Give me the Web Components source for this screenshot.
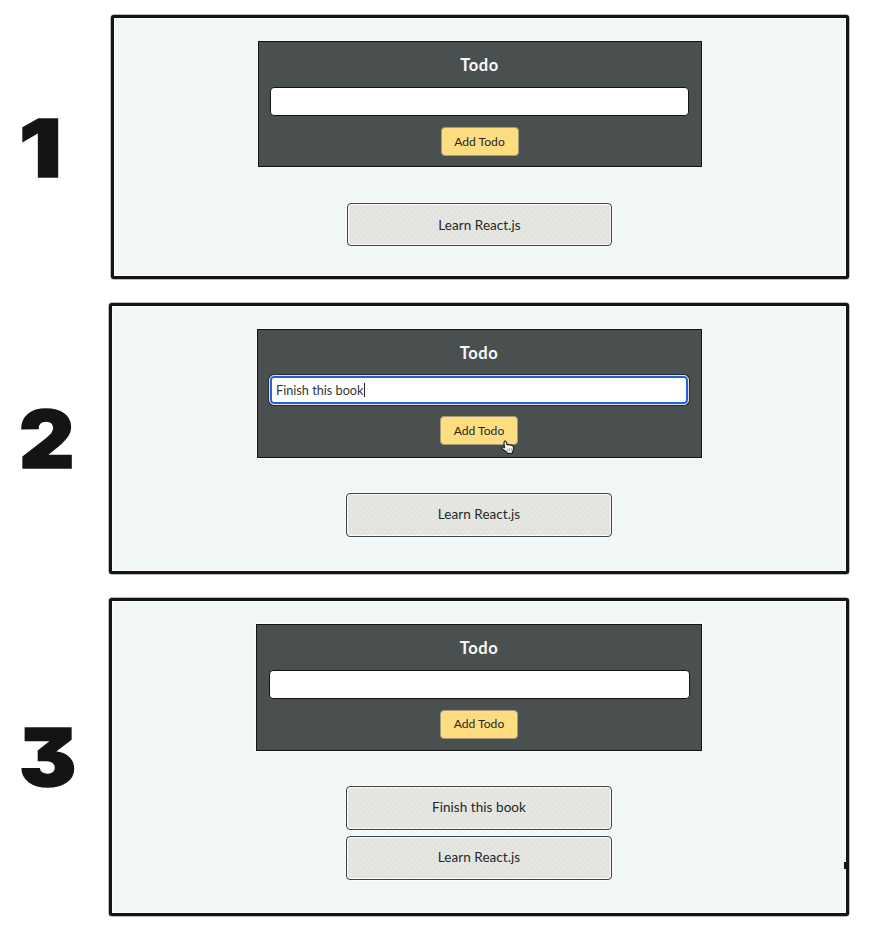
<!DOCTYPE html>
<html lang="en">
<head>
<meta charset="utf-8">
<title>Todo steps</title>
<style>
html,body{margin:0;background:#fff}
body{width:877px;height:934px;overflow:hidden;font-family:Lato,"Liberation Sans",sans-serif;color:#23272b}
</style>
</head>
<body>
<todo-guide>
  <todo-step number="1" style="--h:264px;--left:111px;--num-scale:1.19;--num-top:1px;--card-w:444px;--card-h:126px;--gap:36px;--item-w:265px;--item-h:43px;--item-lh:42px;--btn-lh:27px;--shift:1px">
    <todo-form></todo-form>
    <todo-item>Learn React.js</todo-item>
  </todo-step>
  <todo-step number="2" style="--h:271px;--left:109px;--num-scale:1.08;--num-top:1px;--card-w:445px;--card-h:129px;--gap:35px;--item-w:266px;--item-h:44px;--item-lh:41px;--btn-lh:27px;--shift:0px">
    <todo-form value="Finish this book"></todo-form>
    <todo-item>Learn React.js</todo-item>
  </todo-step>
  <todo-step number="3" style="--h:318px;--left:109px;--num-scale:1.08;--num-top:0px;--card-w:446px;--card-h:127px;--gap:35px;--item-w:266px;--item-h:44px;--item-lh:41px;--btn-lh:25px;--shift:0px">
    <todo-form></todo-form>
    <todo-item>Finish this book</todo-item>
    <todo-item>Learn React.js</todo-item>
    <resize-mark slot="mark"></resize-mark>
  </todo-step>
</todo-guide>
<script>
function define(name, html, init) {
  customElements.define(name, class extends HTMLElement {
    constructor() {
      super();
      this.attachShadow({ mode: 'open' }).innerHTML = html;
    }
    connectedCallback() { if (init) init(this, this.shadowRoot); }
  });
}

define('todo-guide', `
<style>
:host{display:flex;flex-direction:column;gap:24px;padding-top:15px;box-sizing:border-box;height:934px}
</style><slot></slot>`);

define('todo-step', `
<style>
:host{display:grid;grid-template-columns:var(--left) calc(849px - var(--left));height:var(--h);flex:none}
.num{align-self:center;padding:var(--num-top) 0 0 19px;height:60px;color:#141414;font:900 79.5px/60px Inter,sans-serif;font-feature-settings:"cv09" 1;-webkit-text-stroke:1.4px #141414}
.num span{display:inline-block;transform:scaleX(var(--num-scale));transform-origin:0 50%}
.panel{position:relative;box-sizing:border-box;height:var(--h);border:3px solid #141414;border-radius:3px;background:#f1f7f7;box-shadow:inset 0 0 0 1px #fafbfa,0 0 0 .5px #777;
 display:flex;flex-direction:column;align-items:center;padding-top:23px;padding-right:var(--shift)}
</style>
<div class="num"><span></span></div>
<div class="panel"><slot></slot><slot name="mark"></slot></div>`,
(el, root) => {
  root.querySelector('.num span').textContent = el.getAttribute('number');
});

define('todo-form', `
<style>
:host{display:flex;flex-direction:column;align-items:center;box-sizing:border-box;width:var(--card-w);height:var(--card-h);flex:none;
 margin-bottom:var(--gap);padding:13px 11.5px 0;border:1px solid #141414;background:#4a504f;box-shadow:0 0 0 1px #fafbfa}
h2{margin:0;height:20px;font:700 16.5px/21px Lato,sans-serif;letter-spacing:.55px;color:#f8f8f8}
.field{box-sizing:border-box;width:100%;height:29px;margin-top:12px;border:1px solid #141414;border-radius:4px;background:#fff;display:flex;align-items:center;padding-left:6px;font-size:12.7px;line-height:16px;color:#33373a}
.field.focus{height:30px;border-color:#dcdfe0;box-shadow:inset 0 0 0 2px #2262d5,0 0 0 1px #2b2e2d;border-radius:5px}
.caret{width:1px;height:14px;background:#222}
.btn{position:relative;box-sizing:border-box;width:78px;height:29px;margin-top:11px;border:1px solid #a59b7b;border-radius:4px;background:#fedc80;text-align:center;font-size:12.1px;line-height:var(--btn-lh);color:#25282b}
svg{position:absolute;left:60px;top:23px;width:14px;height:15px}
</style>
<h2>Todo</h2>
<div class="field"><span></span></div>
<div class="btn">Add Todo</div>`,
(el, root) => {
  const value = el.getAttribute('value');
  if (!value) return;
  const field = root.querySelector('.field');
  field.classList.add('focus');
  field.firstElementChild.textContent = value;
  field.insertAdjacentHTML('beforeend', '<i class="caret"></i>');
  root.querySelector('.btn').insertAdjacentHTML('beforeend',
    `<svg viewBox="0 0 14 15"><path d="M3.4 1.2c1-.5 1.8.1 2 1l.7 2.6 1-.4 1.2.4 1.1-.2 1 .7 1.2.1.8 1.4.2 2.6-1.1 2.2v1.5l-4.9.6-1.3-2L1.4 9 .9 7.5l1-.7 1.7.9L2.9 3Z" fill="#f4f4f4" stroke="#222526" stroke-width="1.2" stroke-linejoin="round"/><path d="M6.7 8.4v2.7M8.5 8.2v2.7M10.3 8v2.7" stroke="#a5a7a7"/></svg>`);
});

define('todo-item', `
<style>
:host{display:block;box-sizing:border-box;flex:none;width:var(--item-w);height:var(--item-h);margin-bottom:6px;border:1px solid #3d4243;border-radius:4px;text-align:center;
 font-size:13.5px;letter-spacing:.05px;line-height:var(--item-lh);
 background:radial-gradient(circle at 1.5px 1.5px,#f3f4f0 .5px,transparent .8px) 0 0/6px 6px,radial-gradient(circle at 4.5px 4.5px,#f3f4f0 .5px,transparent .8px) 0 0/6px 6px,#e3e4df;
 box-shadow:inset 0 0 0 1px #fafafa,0 0 0 1px #fafbfa}
</style><slot></slot>`);

define('resize-mark', `
<style>
:host{position:absolute;right:-1px;top:261px;width:3px;height:7px;background:#141414}
</style>`);
</script>
</body>
</html>
